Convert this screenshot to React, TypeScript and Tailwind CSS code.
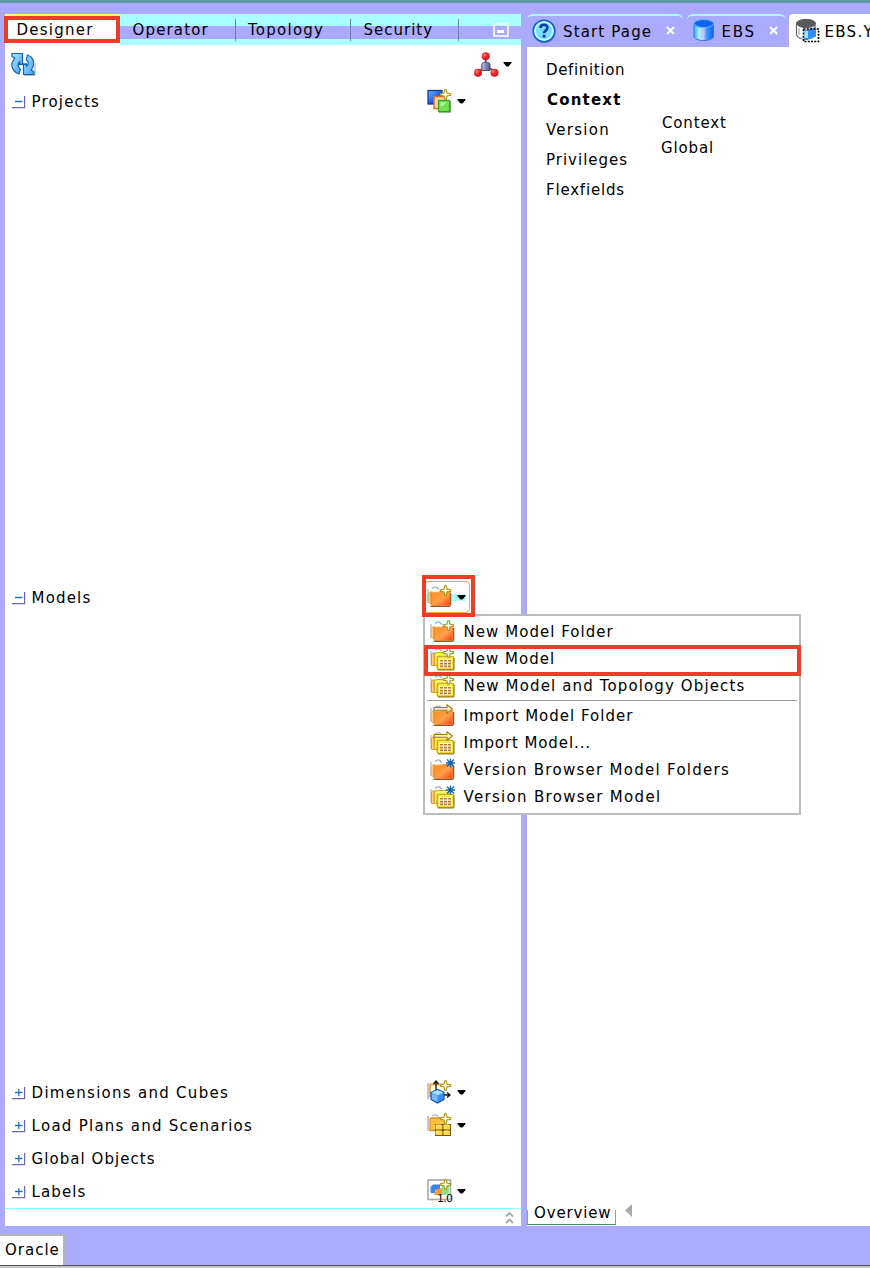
import React from "react";

const Caret = () => (
  <svg width="9" height="5" viewBox="0 0 9 5" className="shrink-0">
    <path d="M0.5 0H8.5V1L5.5 4.5H3.5L0.5 1Z" fill="#000" />
  </svg>
);

const Star = () => (
  <path
    d="M17.7 0.8H19.3L20 4L23.6 4.8V6.2L20 7L19.3 10.2H17.7L17 7L13.4 6.2V4.8L17 4Z"
    fill="#fffef0"
    stroke="#b09c22"
    strokeWidth="1.2"
  />
);

const Arrow = () => (
  <path d="M4 3.5H17V0.8L22.5 5L17 9.2V6.3H4Z" fill="#fff3c8" stroke="#a8780c" strokeWidth="1.1" />
);

const Burst = () => (
  <path d="M20.5 0.5V9.5M17 1.5L24 8.5M24 1.5L17 8.5M16 5H25" stroke="#1463ae" strokeWidth="1.3" />
);

type Mark = "star" | "arrow" | "burst";

const MarkShape = ({ mark }: { mark: Mark }) =>
  mark === "star" ? <Star /> : mark === "arrow" ? <Arrow /> : <Burst />;

const FolderIcon = ({ mark }: { mark: Mark }) => (
  <svg width="25" height="24" viewBox="0 0 25 24" className="shrink-0">
    <defs>
      <linearGradient id="folder" x1="0" y1="0" x2="1" y2="1">
        <stop offset="0" stopColor="#ff8f1c" />
        <stop offset="0.55" stopColor="#ff9f48" />
        <stop offset="1" stopColor="#ff3a10" />
      </linearGradient>
    </defs>
    <path d="M1 18V4" stroke="#b4b4b4" strokeWidth="1.2" />
    <path d="M5 3.5L7 2.2H9.5L12 4.5" fill="none" stroke="#9fadd4" strokeWidth="1.3" />
    <path d="M1.8 18V8L4 6V18.5Z" fill="#ffe0a0" stroke="#e3a04a" strokeWidth="0.9" />
    <path d="M3.5 21.4H22.5L23.6 20V8" fill="none" stroke="#8c5a25" strokeWidth="1.3" />
    <path d="M4 7.5H11.5L13 6.5H22.8V19.5L22 20.6H5L4 19.5Z" fill="url(#folder)" stroke="#e0702a" strokeWidth="0.8" />
    <path d="M4.5 7H12" stroke="#ffcf61" />
    <MarkShape mark={mark} />
  </svg>
);

const ModelIcon = ({ mark }: { mark: Mark }) => (
  <svg width="25" height="24" viewBox="0 0 25 24" className="shrink-0">
    <path d="M1 18V4" stroke="#b4b4b4" strokeWidth="1.2" />
    <path d="M5 3.2L7 1.8H9.5L12 4" fill="none" stroke="#9fadd4" strokeWidth="1.3" />
    <path d="M1.5 18.5V7L4 5.5V18.5Z" fill="#ffd27c" stroke="#dc9330" strokeWidth="0.9" />
    <path d="M4.5 18.5V7L6 5.5H19V17H7V18.5Z" fill="#fff36a" stroke="#dfa51c" strokeWidth="1.1" />
    <rect x="7.2" y="9.2" width="16.5" height="13.2" rx="1.5" fill="#fbe93a" stroke="#b89c18" strokeWidth="1.1" />
    <path d="M8 23H24V10.5" fill="none" stroke="#98801a" strokeWidth="1" />
    <rect x="9" y="12" width="13" height="9" fill="#fffbd8" />
    <path
      d="M10 13h3v1.6h-3zM14 13h3v1.6h-3zM18 13h3v1.6h-3zM10 15.8h3v1.6h-3zM14 15.8h3v1.6h-3zM18 15.8h3v1.6h-3zM10 18.6h3v1.6h-3zM14 18.6h3v1.6h-3zM18 18.6h3v1.6h-3z"
      fill="#b5792c"
    />
    <MarkShape mark={mark} />
  </svg>
);

const RefreshIcon = () => (
  <svg width="25" height="25" viewBox="0 0 25 25">
    <defs>
      <linearGradient id="refresh" x1="0" y1="0" x2="1" y2="1">
        <stop offset="0" stopColor="#b0ecff" />
        <stop offset="1" stopColor="#3d9cf2" />
      </linearGradient>
    </defs>
    <path d="M13 23.5H24V11" fill="none" stroke="#bbb" strokeWidth="1.2" />
    <path
      d="M1 1.5H11.5V12.5H8.5V9.8C6.4 12 7 15.5 9.5 17.5L8 21.8C2.5 20.5 0 15 1.2 10.5L3.8 6L1 4.5Z"
      fill="url(#refresh)"
      stroke="#1262b4"
      strokeWidth="1.2"
    />
    <path
      d="M22.8 22.5H12.5V12H15.5V14.5C18 13 17.8 9.5 15.2 7.5L16.5 3C21.8 4.5 23.6 9.5 22.3 14L20.3 18L22.8 19.5Z"
      fill="url(#refresh)"
      stroke="#1262b4"
      strokeWidth="1.2"
    />
    <path d="M8.5 12.3H15.5" stroke="#1262b4" strokeWidth="1.4" />
  </svg>
);

const TopologyIcon = () => (
  <svg width="26" height="25" viewBox="0 0 26 25">
    <defs>
      <radialGradient id="ball" cx="0.35" cy="0.35">
        <stop offset="0" stopColor="#ff8f85" />
        <stop offset="0.5" stopColor="#f93636" />
        <stop offset="1" stopColor="#d51d1d" />
      </radialGradient>
      <linearGradient id="hub">
        <stop offset="0" stopColor="#b6b9e8" />
        <stop offset="1" stopColor="#54568a" />
      </linearGradient>
    </defs>
    <path d="M12.7 5V12M6 19L11 16M21 19L16 16" stroke="#3f3f55" strokeWidth="1.8" />
    <path d="M8.8 12C8.8 9.6 17 9.6 17 12V18.5H8.8Z" fill="url(#hub)" stroke="#555575" />
    <circle cx="12.7" cy="4.3" r="4" fill="url(#ball)" />
    <circle cx="5" cy="20.8" r="4" fill="url(#ball)" />
    <circle cx="21.5" cy="20.8" r="4" fill="url(#ball)" />
  </svg>
);

const ProjectIcon = () => (
  <svg width="25" height="24" viewBox="0 0 25 24" className="shrink-0">
    <defs>
      <linearGradient id="blueSq" x1="0" y1="0" x2="1" y2="1">
        <stop offset="0" stopColor="#6db6ff" />
        <stop offset="0.6" stopColor="#1c57dc" />
      </linearGradient>
    </defs>
    <rect x="1" y="1.5" width="14" height="13.5" fill="url(#blueSq)" stroke="#0d3aa8" strokeWidth="1.3" />
    <rect x="7" y="7.5" width="12" height="12" fill="#ffd39b" stroke="#e3721b" strokeWidth="1.5" />
    <path d="M12 23H23V12" fill="none" stroke="#27801c" strokeWidth="1.2" />
    <rect x="11.5" y="11.5" width="11" height="11" fill="#75e052" stroke="#35a026" strokeWidth="1.2" />
    <path d="M13.5 18V13.5H20Z" fill="#b8f59b" />
    <Star />
  </svg>
);

const CubeIcon = () => (
  <svg width="25" height="24" viewBox="0 0 25 24" className="shrink-0">
    <path d="M1 19V3" stroke="#b5aaa0" strokeWidth="1.4" />
    <path d="M3 17V4.5H16" fill="#fffbe5" stroke="#eaa646" strokeWidth="1.8" />
    <path d="M9 12V2M6.5 4L9 1L11.5 4M16 15H22M20 12.5L23 15L20 17.5" fill="none" stroke="#111" strokeWidth="1.3" />
    <path d="M4 12.5L10.5 9.5L17 12.5V19.5L10.5 23L4 19.5Z" fill="#3b8eea" stroke="#174fae" strokeWidth="1.2" />
    <path d="M4.5 12.5L10.5 10L16.5 12.5L10.5 15.5Z" fill="#a9deff" />
    <path d="M4.8 13.5L10.5 16V22L4.8 19Z" fill="#78bcfb" />
    <Star />
  </svg>
);

const LoadPlanIcon = () => (
  <svg width="25" height="24" viewBox="0 0 25 24" className="shrink-0">
    <path d="M1 18V3" stroke="#b5aaa0" strokeWidth="1.4" />
    <path d="M5 3L7 2H10L12 4.5" fill="none" stroke="#9aa0b8" />
    <path d="M3 17.5V6L5 5H18V17.5Z" fill="#ffc03f" stroke="#df8f28" strokeWidth="1.3" />
    <rect x="8" y="11" width="16" height="12" fill="#7a560d" />
    <path d="M9 12h6.4v4.6H9zM17 12h6v4.6h-6zM9 18h6.4v4H9zM17 18h6v4h-6z" fill="#ffd739" />
    <path d="M9 16V12H14M17 16V12H22M9 21.5V18H14M17 21.5V18H22" fill="none" stroke="#fff29a" />
    <Star />
  </svg>
);

const LabelIcon = () => (
  <div className="relative h-[24px] w-[25px] shrink-0">
    <svg width="25" height="24" viewBox="0 0 25 24">
      <rect x="1" y="1" width="22.5" height="19.5" fill="#fff" stroke="#aaa" strokeWidth="1.6" />
      <path d="M3.5 14V8L6 5.5H13V11H8V14Z" fill="#3585ea" />
      <rect x="15" y="6" width="7" height="10" fill="#8be08a" />
      <path d="M7 16L9 10.5L15 9V16Z" fill="#ff9831" />
      <Star />
    </svg>
    <span className="absolute left-[10px] top-[14px] text-[11px] leading-[12px] tracking-[-0.8px] [text-shadow:0_0_1px_#fff,0_0_1px_#fff]">
      1.0
    </span>
  </div>
);

const HelpIcon = () => (
  <svg width="25" height="25" viewBox="0 0 25 25" className="shrink-0">
    <circle cx="12.8" cy="13.2" r="11" fill="#777" opacity="0.55" />
    <circle cx="12" cy="12" r="10.8" fill="#b5f4ff" stroke="#125fce" strokeWidth="1.5" />
    <circle cx="12" cy="12" r="8.8" fill="#79dcff" stroke="#c5f8ff" strokeWidth="1.4" />
    <path d="M8.5 9C8.5 4.6 15.6 4.8 15.4 8.8C15.3 11.6 12.1 11.4 12.1 14.3" fill="none" stroke="#063caa" strokeWidth="2.6" />
    <rect x="10.7" y="15.8" width="2.8" height="2.8" fill="#063caa" />
  </svg>
);

const DatabaseIcon = () => (
  <svg width="23" height="24" viewBox="0 0 23 24" className="mb-[3px] shrink-0">
    <defs>
      <linearGradient id="db">
        <stop offset="0" stopColor="#38a5ff" />
        <stop offset="0.25" stopColor="#a6f2ff" />
        <stop offset="0.5" stopColor="#c6bdf8" />
        <stop offset="0.65" stopColor="#3996ff" />
        <stop offset="1" stopColor="#0866ed" />
      </linearGradient>
    </defs>
    <path d="M1 5V19C4 23.8 17.5 23.8 20.5 19V5Z" fill="url(#db)" stroke="#3b77ce" />
    <path d="M1 5.5C1.5 .2 20 .2 20.5 5.5C19.5 11 2.5 11 1 5.5Z" fill="#1262f4" stroke="#67bdff" />
  </svg>
);

const SchemaIcon = () => (
  <svg width="25" height="25" viewBox="0 0 25 25" className="shrink-0">
    <path d="M1.5 5V17C3 20 7 21.5 12 21.5L20 18V5Z" fill="#fff" stroke="#666" strokeWidth="1.2" />
    <path d="M9 12.5L21 9V18L16 21H9Z" fill="#308cf7" />
    <path d="M9 13H13V20H9Z" fill="#9ce7ff" />
    <path d="M1.5 5.5C2 0 20 0 20.5 5.5C20 11 3 11 1.5 5.5Z" fill="#5a5a5a" stroke="#555" />
    <path d="M4 10V17M6 19L8 21" stroke="#ccc" strokeWidth="2" />
    <rect x="8.5" y="11" width="15" height="12.5" fill="none" stroke="#000" strokeWidth="1.6" strokeDasharray="2 1.3" />
  </svg>
);

const Toggle = ({ open }: { open?: boolean }) => (
  <svg width="14" height="14" viewBox="0 0 14 14" className="mt-[2px] shrink-0">
    <path d="M0 12.7H12.6V1" fill="none" stroke="#6a68bd" strokeWidth="1.2" />
    <path d="M3 6.5H10.5" stroke="#176ac0" strokeWidth="1.4" />
    {!open && <path d="M6.8 3V10.3" stroke="#2577b7" strokeWidth="1.3" />}
  </svg>
);

type Label = { text: string; track: string };

const Section = ({ label, open, icon }: { label: Label; open?: boolean; icon?: React.ReactNode }) => (
  <div className="flex h-[33px] shrink-0 items-center pl-[7px]">
    <Toggle open={open} />
    <span className={`ml-[5.6px] w-[395.4px] pt-[2px] ${label.track}`}>{label.text}</span>
    {icon && (
      <div className="flex items-center gap-[5px] pt-px">
        {icon}
        <Caret />
      </div>
    )}
  </div>
);

const MenuItem = ({ label, icon }: { label: Label; icon: React.ReactNode }) => (
  <div className="flex h-[27px] items-center pl-[5px]">
    {icon}
    <span className={`ml-[8.6px] pt-px ${label.track}`}>{label.text}</span>
  </div>
);

const CloseMark = () => (
  <svg width="9" height="9" viewBox="0 0 9 9" className="mb-[3px] shrink-0">
    <path d="M1 1L8 8M8 1L1 8" stroke="#fff" strokeWidth="2" />
  </svg>
);

const NavTabs = () => (
  <div className="flex h-[31px] shrink-0 bg-[linear-gradient(#aaffff_0_12px,#aaaaff_12px_25px,#aaffff_25px)]">
    <div className="relative w-[115px] border-t-2 border-[#ffff66] bg-white pl-[11.5px] leading-[28px] tracking-[1.25px]">
      Designer
      <div className="absolute -left-px top-0 h-[27px] w-[116px] border-4 border-[#ee3d26]" />
    </div>
    <div className="flex w-[115px] items-center pl-[12.5px] tracking-[1.15px]">Operator</div>
    <div className="flex w-[115px] items-center">
      <i className="h-[22px] w-px bg-[#6c80a8]" />
      <span className="ml-[12px] tracking-[1.25px]">Topology</span>
    </div>
    <div className="flex w-[108px] items-center">
      <i className="h-[22px] w-px bg-[#6c80a8]" />
      <span className="ml-[12.5px] tracking-[1px]">Security</span>
    </div>
    <div className="flex grow items-center">
      <i className="h-[22px] w-px bg-[#6c80a8]" />
      <svg width="16" height="14" viewBox="0 0 16 14" className="ml-[34px]">
        <rect x="1" y="1" width="14" height="12" fill="none" stroke="#fff" strokeWidth="1.6" />
        <rect x="4" y="7" width="7" height="3" fill="#fff" />
      </svg>
    </div>
  </div>
);

const Navigator = () => (
  <section className="flex w-[516px] shrink-0 flex-col bg-white">
    <NavTabs />
    <div className="flex h-[39px] shrink-0 items-center justify-between pl-[6px] pr-[9px]">
      <RefreshIcon />
      <div className="flex items-center gap-[4px]">
        <TopologyIcon />
        <Caret />
      </div>
    </div>
    <Section label={{ text: "Projects", track: "tracking-[1.15px]" }} open icon={<ProjectIcon />} />
    <div className="h-[463px] shrink-0" />
    <div className="relative z-10">
      <Section
        label={{ text: "Models", track: "tracking-[1.15px]" }}
        open
        icon={
          <div className="-ml-[2px] -mr-[14px] bg-[linear-gradient(transparent_9px,#aaffff_9px_16px,transparent_16px)] pl-[2px] pr-[14px]">
            <FolderIcon mark="star" />
          </div>
        }
      />
      <div className="absolute left-[419px] top-px h-[32px] w-[46px] rounded-[4px] border border-[#f2a63c]" />
      <div className="absolute left-[417px] top-[-5px] h-[42px] w-[53px] border-4 border-[#ee3d26]" />
    </div>
    <div className="h-[462px] shrink-0" />
    <Section label={{ text: "Dimensions and Cubes", track: "tracking-[1.28px]" }} icon={<CubeIcon />} />
    <Section label={{ text: "Load Plans and Scenarios", track: "tracking-[1.26px]" }} icon={<LoadPlanIcon />} />
    <Section label={{ text: "Global Objects", track: "tracking-[1.05px]" }} />
    <Section label={{ text: "Labels", track: "tracking-[1.1px]" }} icon={<LabelIcon />} />
    <div className="mt-px flex grow items-center justify-end border-t border-[#88ffff] pr-[7px]">
      <svg width="9" height="12" viewBox="0 0 9 12">
        <path d="M1 4.5L4.5 1L8 4.5M1 11L4.5 7.5L8 11" fill="none" stroke="#aaa" strokeWidth="1.8" />
      </svg>
    </div>
  </section>
);

const Editor = () => (
  <section className="flex w-[343px] shrink-0 flex-col">
    <div className="flex h-[33px] shrink-0">
      <div className="mr-[4px] flex w-[156px] items-center rounded-t-[6px] border-t-2 border-t-[#aaffff] pl-[5px]">
        <HelpIcon />
        <span className="ml-[6px] w-[103px] tracking-[1.15px]">Start Page</span>
        <CloseMark />
      </div>
      <div className="mr-[3px] flex w-[99px] items-center rounded-t-[6px] border-t-2 border-t-[#aaffff] pl-[6px]">
        <DatabaseIcon />
        <span className="ml-[5.5px] w-[47.5px] tracking-[1.7px]">EBS</span>
        <CloseMark />
      </div>
      <div className="flex w-[81px] items-center overflow-hidden rounded-tl-[4px] bg-white pl-[6px] whitespace-nowrap">
        <SchemaIcon />
        <span className="ml-[4.5px] pt-[3px] tracking-[1.3px]">EBS.Y</span>
      </div>
    </div>
    <div className="flex grow flex-col bg-white">
      <div className="flex grow pl-[19px] pt-[8px]">
        <div className="w-[115px] leading-[30px]">
          <div className="tracking-[0.65px]">Definition</div>
          <div className="pl-px font-bold tracking-[1.2px]">Context</div>
          <div className="tracking-[1.25px]">Version</div>
          <div>Privileges</div>
          <div className="tracking-[0.8px]">Flexfields</div>
        </div>
        <div className="pt-[56px] leading-[25px] tracking-[0.85px]">
          <div className="pl-px">Context</div>
          <div>Global</div>
        </div>
      </div>
      <div className="flex h-[26px] shrink-0">
        <div className="relative h-[25px] w-[89px] pl-[7px] leading-[26px] tracking-[0.85px]">
          Overview
          <div className="absolute bottom-0 left-0 h-[15px] w-[89px] border border-t-0 border-x-[#999] border-b-[#368d82]" />
        </div>
        <svg width="7" height="13" viewBox="0 0 7 13" className="ml-[9px] mt-[4px]">
          <path d="M7 0V13L0 6.5Z" fill="#aaa" />
        </svg>
      </div>
    </div>
  </section>
);

const ModelMenu = () => (
  <div className="absolute left-[423px] top-[614px] h-[201px] w-[378px] border-2 border-[#bcbcbc] bg-white pt-[2px]">
    <MenuItem label={{ text: "New Model Folder", track: "tracking-[1.03px]" }} icon={<FolderIcon mark="star" />} />
    <MenuItem label={{ text: "New Model", track: "tracking-[1px]" }} icon={<ModelIcon mark="star" />} />
    <MenuItem
      label={{ text: "New Model and Topology Objects", track: "tracking-[1.13px]" }}
      icon={<ModelIcon mark="star" />}
    />
    <div className="mx-[2px] mb-px mt-px h-px bg-[#999]" />
    <MenuItem label={{ text: "Import Model Folder", track: "tracking-[1px]" }} icon={<FolderIcon mark="arrow" />} />
    <MenuItem label={{ text: "Import Model...", track: "tracking-[0.9px]" }} icon={<ModelIcon mark="arrow" />} />
    <MenuItem
      label={{ text: "Version Browser Model Folders", track: "tracking-[1.28px]" }}
      icon={<FolderIcon mark="burst" />}
    />
    <MenuItem label={{ text: "Version Browser Model", track: "tracking-[1.3px]" }} icon={<ModelIcon mark="burst" />} />
    <div className="absolute -left-px top-[29px] h-[31px] w-[377px] border-4 border-[#ee3d26]" />
  </div>
);

export default function App() {
  return (
    <main className="relative flex h-[1268px] w-[870px] flex-col overflow-hidden bg-[#aaaaff] font-['DejaVu_Sans',sans-serif] text-[15px] leading-[20px] tracking-[1px] text-black">
      <div className="h-[3px] shrink-0 bg-[#5c9ba8]" />
      <div className="flex h-[1223px] shrink-0 pl-[5px] pt-[11px]">
        <Navigator />
        <div className="w-[6px] shrink-0" />
        <Editor />
      </div>
      <div className="mt-[8px] h-[31px] w-[65px] border-r-2 border-t-2 border-[#b4b4b4] bg-white pl-[5px] leading-[29px]">
        Oracle
      </div>
      <div className="h-[3px] border-t border-[#555] bg-[#c4c4c4]" />
      <ModelMenu />
    </main>
  );
}
